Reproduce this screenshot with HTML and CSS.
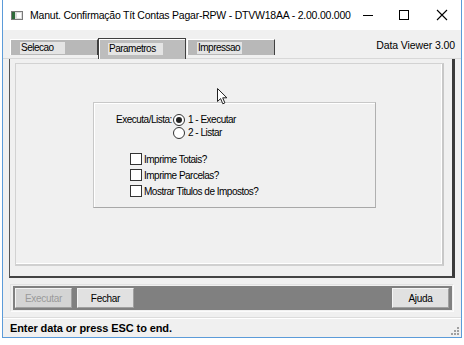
FILE: index.html
```html
<!DOCTYPE html>
<html lang="pt">
<head>
  <meta charset="UTF-8"/>
  <title>Manut. Confirmação Tít Contas Pagar-RPW</title>
  <link rel="stylesheet" href="styles.css">
</head>
<body>

<div class="window">
  <div class="titlebar">
    <svg class="app-icon" width="12" height="9" viewBox="0 0 12 9">
      <rect x="0.5" y="0.5" width="11" height="8" fill="#dcdcdc" stroke="#7a7a7a"/>
      <rect x="1" y="1" width="3" height="7" fill="#2e6b3a"/>
      <rect x="6" y="2" width="4" height="5" fill="#fff"/>
    </svg>
    <span class="title">Manut. Confirmação Tít Contas Pagar-RPW - DTVW18AA - 2.00.00.000</span>
    <div class="controls">
      <svg width="31" height="30" viewBox="0 0 31 30"><path d="M9 15.5h10" stroke="#000" stroke-width="1"/></svg>
      <svg width="38" height="30" viewBox="0 0 38 30"><rect x="14.5" y="10.5" width="9" height="9" fill="none" stroke="#000"/></svg>
      <svg width="38" height="30" viewBox="0 0 38 30"><path d="M14 10l10 10M24 10l-10 10" stroke="#000" stroke-width="1.1"/></svg>
    </div>
  </div>

  <div class="client">
    <div class="tabrow">
      <div class="tab"><span class="tab-label">Selecao</span></div>
      <div class="tab active"><span class="tab-label">Parametros</span></div>
      <div class="tab"><span class="tab-label">Impressao</span></div>
      <span class="viewer">Data Viewer 3.00</span>
    </div>

    <div class="panel">
      <div class="panel-inner">
        <div class="group">
          <div class="radio-row">
            <span class="field-label">Executa/Lista:</span>
            <span class="radio checked"></span><span>1 - Executar</span>
          </div>
          <div class="radio-row">
            <span class="field-label"></span>
            <span class="radio"></span><span>2 - Listar</span>
          </div>
          <div class="checks">
            <div class="check-row"><span class="box"></span><span>Imprime Totais?</span></div>
            <div class="check-row"><span class="box"></span><span>Imprime Parcelas?</span></div>
            <div class="check-row"><span class="box"></span><span>Mostrar Titulos de Impostos?</span></div>
          </div>
        </div>
      </div>
      <svg class="cursor" width="12" height="18" viewBox="0 0 12 18">
        <path d="M0.5 0.5V13.5L3.6 10.6L5.8 15.8L7.9 14.9L5.7 9.8H9.9Z" fill="#fff" stroke="#222" stroke-width="1" stroke-linejoin="round"/>
      </svg>
    </div>

    <div class="buttonbar">
      <div class="buttonbar-inner">
        <button class="btn" disabled>Executar</button>
        <button class="btn">Fechar</button>
        <button class="btn btn-right">Ajuda</button>
      </div>
    </div>

    <div class="statusbar">
      <span class="status-text">Enter data or press ESC to end.</span>
      <svg class="grip" width="8" height="8" viewBox="0 0 8 8">
        <rect x="6" y="0" width="2" height="2" fill="#a0a0a0"/>
        <rect x="3" y="3" width="2" height="2" fill="#a0a0a0"/>
        <rect x="6" y="3" width="2" height="2" fill="#a0a0a0"/>
        <rect x="0" y="6" width="2" height="2" fill="#a0a0a0"/>
        <rect x="3" y="6" width="2" height="2" fill="#a0a0a0"/>
        <rect x="6" y="6" width="2" height="2" fill="#a0a0a0"/>
      </svg>
    </div>
  </div>
</div>

</body>
</html>
```

FILE: styles.css
```css
* { box-sizing: border-box; }
body {
  margin: 0; background: #fff;
  font-family: "Liberation Sans", Arial, sans-serif;
  font-size: 10px; letter-spacing: -0.5px; color: #000;
}
.window {
  width: 460px; height: 338px; margin-left: 2px;
  border: 1px solid #5b9bd9; border-top: none;
  display: flex; flex-direction: column; background: #f0f0f0;
  overflow: hidden;
}
.titlebar {
  height: 30px; background: #fff; display: flex; align-items: center;
  padding-left: 8px; flex-shrink: 0;
}
.app-icon { margin-right: 7px; margin-top: 1px; flex-shrink: 0; }
.title {
  font-family: "Liberation Sans", Arial, sans-serif; font-size: 10.5px;
  color: #000; white-space: nowrap; letter-spacing: -0.22px;
  flex: 1; min-width: 0;
}
.controls { display: flex; flex-shrink: 0; }
.controls svg { display: block; }

.client { flex: 1; display: flex; flex-direction: column; position: relative; }

.tabrow {
  height: 29px; display: flex; align-items: flex-end; padding-left: 7px;
  border-bottom: 1px solid #d8d8d8; position: relative;
}
.tab {
  width: 88px; height: 16px; background: #b8b8b8;
  border-top: 1px solid #fff; border-left: 1px solid #fff;
  border-right: 1px solid #404040;
  padding: 2px 0 0 9px; margin-bottom: 3px;
}
.tab-label {
  display: block; width: 45px; height: 12px; line-height: 12px;
  background: #e4e4e4; padding-left: 1px;
}
.tab.active {
  height: 21px; margin-bottom: -1px; background: #bdbdbd;
  border: 1px solid #404040; border-bottom: none;
  box-shadow: inset 1px 1px 0 #fff;
  padding: 4px 0 0 9px; margin-right: 1px;
}
.tab.active .tab-label { width: 55px; }
.viewer {
  margin-left: auto; margin-right: 6px; margin-bottom: 7px;
  font-size: 10.5px; letter-spacing: -0.1px;
}

.panel {
  height: 219px; margin: 0 6px 0 6px;
  border-left: 1px solid #555; border-bottom: 2px solid #444;
  border-right: 3px solid #3a3a3a;
  padding: 4px 8px 10px 5px; position: relative;
}
.panel-inner {
  height: 100%;
  border-top: 1px solid #d2d2d2; border-left: 1px solid #d2d2d2;
  border-right: 2px solid #c8c8c8; border-bottom: 2px solid #d0d0d0;
  box-shadow: inset -1px -1px 0 #fff;
  padding: 38px 0 0 77px;
}
.group {
  width: 283px; height: 106px;
  border: 1px solid #c8c8c8; border-right-color: #b0b0b0; border-bottom-color: #a8a8a8;
  box-shadow: inset 1px 1px 0 #fff;
  padding: 10px 0 0 22px;
}
.radio-row { display: flex; align-items: center; height: 13px; }
.field-label { width: 57px; flex-shrink: 0; text-align: right; padding-right: 2px; white-space: nowrap; }
.radio {
  width: 12px; height: 12px; border-radius: 50%; border: 1px solid #333;
  background: #fff; margin-right: 3px; position: relative; flex-shrink: 0;
}
.radio.checked::after {
  content: ""; position: absolute; left: 2px; top: 2px;
  width: 6px; height: 6px; border-radius: 50%; background: #222;
}
.checks { padding: 12px 0 0 14px; }
.check-row { display: flex; align-items: center; height: 16px; }
.box {
  width: 12px; height: 12px; border: 1px solid #333; background: #fff;
  margin-right: 2px; flex-shrink: 0;
}
.cursor { position: absolute; left: 207px; top: 29px; }

.buttonbar {
  margin: 6px 7px 0 7px; height: 28px;
  border: 1px solid #e2e2e2; border-right-color: #fcfcfc; border-bottom-color: #fcfcfc;
  padding: 1px 1px 1px 2px;
}
.buttonbar-inner {
  height: 100%; background: #808080; display: flex; align-items: center;
  padding: 0 3px 0 2px;
}
.btn {
  width: 57px; height: 20px; font-family: inherit; font-size: 10px; letter-spacing: -0.3px;
  background: #e1e1e1; color: #000;
  border: 1px solid #f4f4f4; border-right-color: #a0a0a0; border-bottom-color: #a0a0a0;
  margin-right: 5px; padding: 0;
}
.btn:disabled { color: #9a9a9a; background: #d4d4d4; }
.btn-right { margin-left: auto; margin-right: 0; }

.statusbar {
  margin-top: 5px; flex: 1; border-top: 1px solid #dcdcdc;
  box-shadow: inset 0 1px 0 #fff;
  display: flex; align-items: center; padding: 0 3px 0 7px; position: relative;
}
.status-text {
  font-family: "Liberation Sans", Arial, sans-serif; font-weight: bold; font-size: 11px;
  letter-spacing: -0.1px;
}
.grip { position: absolute; right: 2px; bottom: 2px; }
```
